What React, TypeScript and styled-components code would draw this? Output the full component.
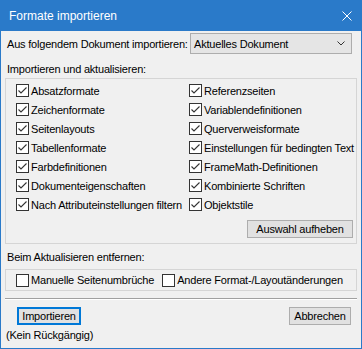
import styled, { createGlobalStyle } from "styled-components"

const GlobalStyle = createGlobalStyle`
   html, body {
      margin: 0;
      padding: 0;
      background: #f0f0f0;
   }
   body {
      font-family: "Liberation Sans", Arial, sans-serif;
      font-size: 11px;
      letter-spacing: -0.2px;
      color: #000;
   }
`

const Window = styled.div`
   width: 362px;
   height: 349px;
   box-sizing: border-box;
   border: 1px solid #2a7ac9;
   border-top: none;
   background: #f0f0f0;
   display: flex;
   flex-direction: column;
`
const TitleBar = styled.div`
   height: 31px;
   margin: 0 -1px;
   background: #2a7ac9;
   display: flex;
   align-items: center;
   justify-content: space-between;
   padding: 0 10px 0 9px;
   color: #fff;
   font-size: 12px;
   letter-spacing: 0;
`
const Body = styled.div`
   display: flex;
   flex-direction: column;
   padding: 0 4px;
`
const SourceRow = styled.div`
   margin-top: 2px;
   height: 21px;
   display: flex;
   align-items: center;
   justify-content: space-between;
   padding-left: 2px;
   padding-right: 5px;
   white-space: nowrap;
`
const Select = styled.div`
   width: 162px;
   height: 21px;
   flex-shrink: 0;
   box-sizing: border-box;
   border: 1px solid #adadad;
   background: #e5e5e5;
   display: flex;
   align-items: center;
   justify-content: space-between;
   padding: 0 6px 0 3px;
`
const SectionLabel = styled.div<{ top: number; bottom: number }>`
   line-height: 13px;
   margin-top: ${p => p.top}px;
   margin-bottom: ${p => p.bottom}px;
   padding-left: 2px;
`
const GroupBox = styled.div<{ h: number }>`
   height: ${p => p.h}px;
   box-sizing: border-box;
   border: 1px solid #d5d5d5;
   display: flex;
   flex-direction: column;
`
const CheckGrid = styled.div`
   display: grid;
   grid-template-columns: 173px 1fr;
   grid-auto-rows: 19px;
   padding: 2px 0 0 10px;
`
const InlineChecks = styled.div`
   display: flex;
   align-items: center;
   height: 100%;
   padding-left: 10px;
   gap: 8px;
`
const CheckLabel = styled.label`
   display: flex;
   align-items: center;
   gap: 2px;
   white-space: nowrap;
`
const Box = styled.span`
   width: 13px;
   height: 13px;
   flex-shrink: 0;
   box-sizing: border-box;
   border: 1px solid #333;
   background: #fff;
   display: inline-flex;
   align-items: center;
   justify-content: center;
`
const Button = styled.button<{ primary?: boolean; w: number }>`
   font-family: inherit;
   font-size: 11px;
   letter-spacing: -0.2px;
   color: #000;
   width: ${p => p.w}px;
   height: 18px;
   padding: 0;
   box-sizing: border-box;
   background: #e1e1e1;
   border: ${p => (p.primary ? "2px solid #0078d7" : "1px solid #adadad")};
`
const ClearRow = styled.div`
   display: flex;
   justify-content: flex-end;
   margin-top: 6px;
   padding-right: 3px;
`
const Separator = styled.div`
   margin-top: 7px;
   border-top: 1px solid #a0a0a0;
   border-bottom: 1px solid #fff;
`
const Footer = styled.div`
   margin-top: 7px;
   display: flex;
   justify-content: space-between;
   padding: 0 6px 0 12px;
`
const Note = styled.div`
   margin-top: 4px;
   line-height: 13px;
   padding-left: 1px;
`

function Checkbox({ label, checked }: { label: string; checked?: boolean }) {
   return (
      <CheckLabel>
         <Box>
            {checked && (
               <svg width="11" height="11" viewBox="0 0 11 11">
                  <polyline points="1.5,5.5 4,8 9.5,2.5" fill="none" stroke="#333" strokeWidth="1.1" />
               </svg>
            )}
         </Box>
         <span>{label}</span>
      </CheckLabel>
   )
}

const options = [
   ["Absatzformate", "Referenzseiten"],
   ["Zeichenformate", "Variablendefinitionen"],
   ["Seitenlayouts", "Querverweisformate"],
   ["Tabellenformate", "Einstellungen für bedingten Text"],
   ["Farbdefinitionen", "FrameMath-Definitionen"],
   ["Dokumenteigenschaften", "Kombinierte Schriften"],
   ["Nach Attributeinstellungen filtern", "Objektstile"],
]

export default function App() {
   return (
      <>
         <GlobalStyle />
         <Window>
            <TitleBar>
               <span>Formate importieren</span>
               <svg width="10" height="10" viewBox="0 0 10 10">
                  <path d="M0.5 0.5 L9.5 9.5 M9.5 0.5 L0.5 9.5" stroke="#fff" strokeWidth="1" />
               </svg>
            </TitleBar>
            <Body>
               <SourceRow>
                  <span>Aus folgendem Dokument importieren:</span>
                  <Select>
                     <span>Aktuelles Dokument</span>
                     <svg width="8" height="5" viewBox="0 0 8 5">
                        <polyline points="0.5,0.5 4,4 7.5,0.5" fill="none" stroke="#333" strokeWidth="1" />
                     </svg>
                  </Select>
               </SourceRow>
               <SectionLabel top={9} bottom={2}>Importieren und aktualisieren:</SectionLabel>
               <GroupBox h={166}>
                  <CheckGrid>
                     {options.flatMap(([a, b]) => [
                        <Checkbox key={a} label={a} checked />,
                        <Checkbox key={b} label={b} checked />,
                     ])}
                  </CheckGrid>
                  <ClearRow>
                     <Button w={106}>Auswahl aufheben</Button>
                  </ClearRow>
               </GroupBox>
               <SectionLabel top={7} bottom={5}>Beim Aktualisieren entfernen:</SectionLabel>
               <GroupBox h={22}>
                  <InlineChecks>
                     <Checkbox label="Manuelle Seitenumbrüche" />
                     <Checkbox label="Andere Format-/Layoutänderungen" />
                  </InlineChecks>
               </GroupBox>
               <Separator />
               <Footer>
                  <Button primary w={64}>Importieren</Button>
                  <Button w={62}>Abbrechen</Button>
               </Footer>
               <Note>(Kein Rückgängig)</Note>
            </Body>
         </Window>
      </>
   )
}
